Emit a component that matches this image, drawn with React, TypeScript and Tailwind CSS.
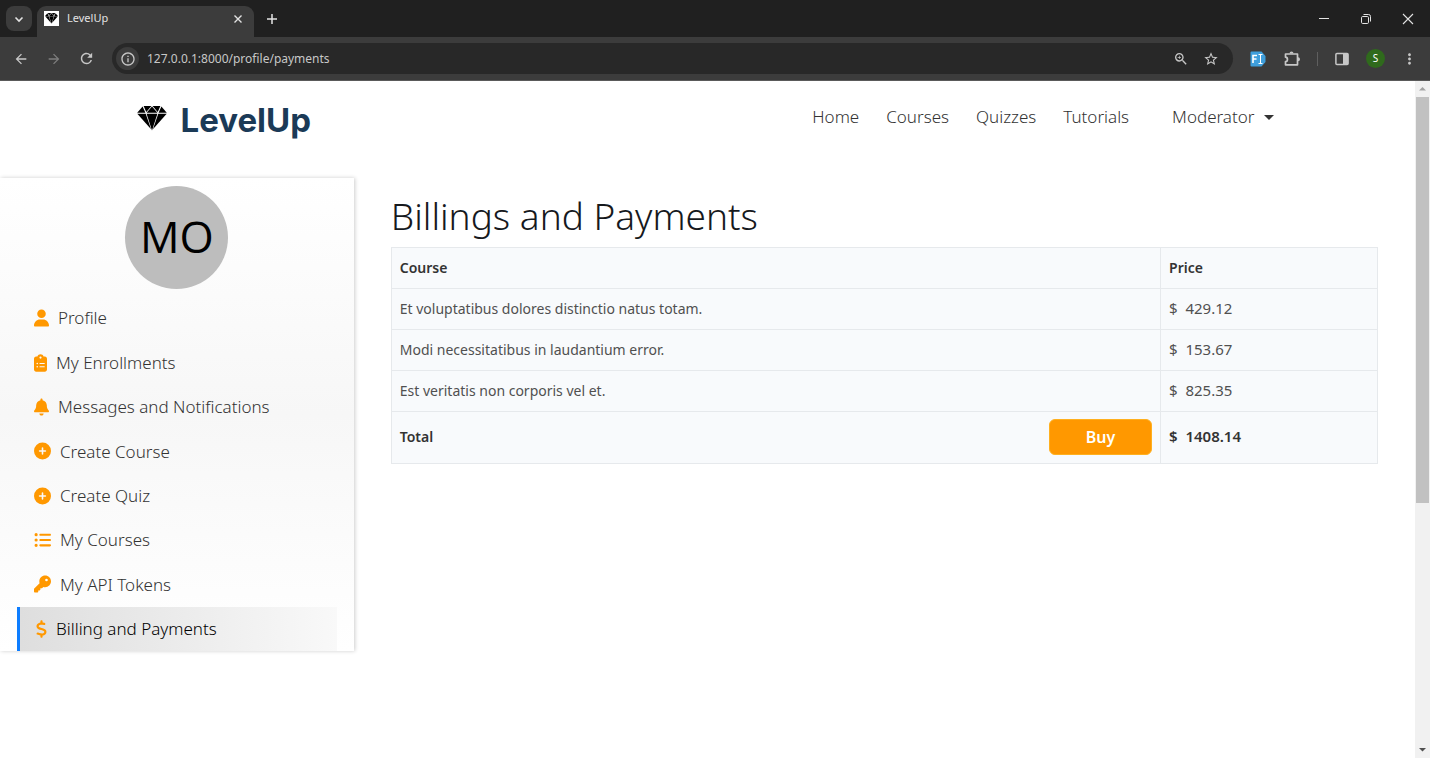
import type { ReactNode } from "react";
import { FaBell, FaCirclePlus, FaClipboardList, FaDollarSign, FaKey, FaListUl, FaUser } from "react-icons/fa6";
import {
  MdArrowBack,
  MdArrowForward,
  MdMoreVert,
  MdOutlineInfo,
  MdRefresh,
  MdStarBorder,
  MdZoomIn,
} from "react-icons/md";

function Diamond({ className }: { className?: string }) {
  return (
    <svg viewBox="0 0 30 25" className={className} fill="currentColor" aria-hidden="true">
      <path d="M5.6.6 8.4 6.8H.2z" />
      <path d="M6.6 0h7.8L9.3 6z" />
      <path d="M15 .5 20.4 6.8H9.6z" />
      <path d="M15.6 0h7.8l-2.700 6z" />
      <path d="M24.400.6 29.800 6.800h-8.200z" />
      <path d="M.3 7.700h8.400l5.400 15.600z" />
      <path d="M9.600 7.700h10.800L15 24.600z" />
      <path d="M21.300 7.700h8.400l-13.800 15.600z" />
    </svg>
  );
}

function IconButton({ label, className = "", children }: { label: string; className?: string; children: ReactNode }) {
  return (
    <button type="button" aria-label={label} className={`flex shrink-0 items-center justify-center ${className}`}>
      {children}
    </button>
  );
}

function TabStrip() {
  return (
    <div className="flex h-[37px] items-end bg-[#202020] pl-1.5 text-[#e3e3e3]">
      <IconButton label="Search tabs" className="mb-1.5 h-[25px] w-[26px] rounded-lg bg-[#3c3c3c]">
        <svg viewBox="0 0 10 10" className="size-2.5" fill="none" stroke="currentColor" strokeWidth="1.6">
          <path d="M1.5 3.5 5 7l3.5-3.5" />
        </svg>
      </IconButton>
      <div className="ml-[5px] flex h-[31px] w-[217px] items-center rounded-t-[9px] bg-[#3c3c3c] pr-2.5 pb-1.5 pl-[7px]">
        <span className="flex size-[15px] items-center justify-center bg-white text-black">
          <Diamond className="w-[13px]" />
        </span>
        <span className="ml-2 flex-1 text-[11px]">LevelUp</span>
        <IconButton label="Close tab" className="size-3">
          <svg viewBox="0 0 10 10" className="size-2.5" stroke="currentColor" strokeWidth="1.4">
            <path d="m1.5 1.5 7 7m0-7-7 7" />
          </svg>
        </IconButton>
      </div>
      <IconButton label="New tab" className="mb-2.5 ml-2.5 size-4">
        <svg viewBox="0 0 12 12" className="size-3" stroke="currentColor" strokeWidth="1.5">
          <path d="M6 1v10M1 6h10" />
        </svg>
      </IconButton>
      <div className="ml-auto flex h-full items-center gap-[30px] pr-4">
        <IconButton label="Minimize" className="size-3">
          <svg viewBox="0 0 12 12" className="size-3" stroke="currentColor">
            <path d="M1 5.5h10" />
          </svg>
        </IconButton>
        <IconButton label="Restore" className="size-3">
          <svg viewBox="0 0 12 12" className="size-3" fill="none" stroke="currentColor">
            <rect x="1.5" y="3.5" width="7" height="7" rx="1.2" />
            <path d="M3.5 1.5h5a2 2 0 0 1 2 2v5" />
          </svg>
        </IconButton>
        <IconButton label="Close window" className="size-3">
          <svg viewBox="0 0 12 12" className="size-3" stroke="currentColor" strokeWidth="1.1">
            <path d="m1 1 10 10M11 1 1 11" />
          </svg>
        </IconButton>
      </div>
    </div>
  );
}

function Toolbar() {
  return (
    <div className="flex h-11 items-center border-b border-[#5a5a5a] bg-[#3c3c3c] px-3 text-[#c7c7c7]">
      <IconButton label="Back" className="size-[17px]">
        <MdArrowBack className="size-4" />
      </IconButton>
      <IconButton label="Forward" className="ml-4 size-[17px] text-[#7d7d7d]">
        <MdArrowForward className="size-4" />
      </IconButton>
      <IconButton label="Reload" className="ml-4 size-[17px]">
        <MdRefresh className="size-[17px]" />
      </IconButton>
      <div className="ml-[17px] flex h-[31px] flex-1 items-center rounded-full bg-[#282828] pr-3.5 pl-1">
        <IconButton label="Site information" className="size-[23px] rounded-full bg-[#3c3c3c]">
          <MdOutlineInfo className="size-4" />
        </IconButton>
        <input
          type="text"
          aria-label="Address"
          defaultValue="127.0.0.1:8000/profile/payments"
          className="ml-2 min-w-0 flex-1 bg-transparent text-[12px] outline-none"
        />
        <IconButton label="Zoom" className="size-4">
          <MdZoomIn className="size-[18px]" />
        </IconButton>
        <IconButton label="Bookmark" className="ml-3.5 size-4">
          <MdStarBorder className="size-[18px]" />
        </IconButton>
      </div>
      <IconButton label="Font extension" className="ml-[17px] size-4">
        <svg viewBox="0 0 16 16" className="size-4">
          <path d="M1.5.5h10l4 4.5v6l-4 4.5h-10a1 1 0 0 1-1-1v-13a1 1 0 0 1 1-1z" fill="#3f9fdc" />
          <path d="M3 12V4.5h4M3 8h3.5" stroke="#fff" strokeWidth="1.6" fill="none" />
          <path d="M8.5 3.5h4M8.5 12.5h4M10.5 3.5v9" stroke="#fff" />
        </svg>
      </IconButton>
      <IconButton label="Extensions" className="ml-[17px] size-[18px]">
        <svg viewBox="0 0 18 18" className="size-[18px]">
          <path
            d="M2.5 4h12v10.8h-12v-3.2c2.6-.2 2.6-4.2 0-4.4z"
            fill="none"
            stroke="currentColor"
            strokeWidth="1.7"
            strokeLinejoin="round"
          />
          <path d="M6.5 3.5a2 2 0 0 1 4 0zM15 7.3a2 2 0 0 1 0 4z" fill="currentColor" />
        </svg>
      </IconButton>
      <span className="ml-4 h-3.5 w-px bg-[#5f5f5f]" />
      <IconButton label="Side panel" className="ml-4 size-4">
        <svg viewBox="0 0 16 16" className="size-4">
          <rect x="1.9" y="2.4" width="12.2" height="11.2" rx="1" fill="none" stroke="currentColor" strokeWidth="1.5" />
          <path d="M9 2.5h5v11H9z" fill="currentColor" />
        </svg>
      </IconButton>
      <button
        type="button"
        aria-label="Account"
        className="ml-4 flex size-[19px] items-center justify-center rounded-full bg-[#2f6a1c] text-[10px] text-white"
      >
        S
      </button>
      <IconButton label="Menu" className="ml-4 size-[17px]">
        <MdMoreVert className="size-5" />
      </IconButton>
    </div>
  );
}

const navLinks = ["Home", "Courses", "Quizzes", "Tutorials"];

function SiteHeader() {
  return (
    <header className="mx-auto flex h-[97px] w-full max-w-[1142px] items-start justify-between">
      <a href="#home" className="flex items-start pt-5">
        <Diamond className="mt-[5px] w-[30px] text-black" />
        <span className="ml-3.5 font-['Inter',sans-serif] text-[33px] leading-[38px] font-bold text-[#1b3a57]">
          LevelUp
        </span>
      </a>
      <nav className="flex items-center pt-6 pr-[5px] text-[17px] leading-6 font-light text-[#333]">
        <div className="flex gap-[27px]">
          {navLinks.map((link) => (
            <a key={link} href={`#${link.toLowerCase()}`}>
              {link}
            </a>
          ))}
        </div>
        <button type="button" className="ml-[43px] flex items-center gap-[9px]">
          Moderator
          <svg viewBox="0 0 10 5" className="w-2.5" fill="currentColor" aria-hidden="true">
            <path d="M0 0h10L5 5z" />
          </svg>
        </button>
      </nav>
    </header>
  );
}

const menu = [
  { label: "Profile", icon: FaUser, width: "w-[15px]" },
  { label: "My Enrollments", icon: FaClipboardList, width: "w-[13px]" },
  { label: "Messages and Notifications", icon: FaBell, width: "w-[15px]" },
  { label: "Create Course", icon: FaCirclePlus, width: "w-[17px]" },
  { label: "Create Quiz", icon: FaCirclePlus, width: "w-[17px]" },
  { label: "My Courses", icon: FaListUl, width: "w-[17px]" },
  { label: "My API Tokens", icon: FaKey, width: "w-[17px]" },
  { label: "Billing and Payments", icon: FaDollarSign, width: "w-[11px]", active: true },
];

function Sidebar() {
  return (
    <aside className="flex min-h-[473px] w-1/4 flex-col bg-linear-to-b from-white via-[#f7f7f7] to-white px-[17px] pt-2 shadow-[1px_0_4px_rgba(0,0,0,0.2)]">
      <div className="flex size-[103px] items-center justify-center self-center rounded-full bg-[#bdbdbd] pb-1 font-['Open_Sans',sans-serif] text-[44px] text-black">
        MO
      </div>
      <ul className="mt-[7px] grid flex-1 auto-rows-fr text-[17px] font-light">
        {menu.map(({ label, icon: Icon, width, active }) => (
          <li key={label} className="flex">
            <a
              href="#profile"
              aria-current={active ? "page" : undefined}
              className={
                active
                  ? "flex flex-1 items-center gap-[9px] border-l-[3px] border-[#0d7dff] bg-linear-to-r from-[#dedede] to-[#f9f9f9] pl-4 text-black"
                  : "flex flex-1 items-center gap-[9px] pl-[17px] text-[#333]"
              }
            >
              <Icon className={`h-[18px] text-[#ff9800] ${width}`} />
              {label}
            </a>
          </li>
        ))}
      </ul>
    </aside>
  );
}

const courses = [
  { name: "Et voluptatibus dolores distinctio natus totam.", price: "429.12" },
  { name: "Modi necessitatibus in laudantium error.", price: "153.67" },
  { name: "Est veritatis non corporis vel et.", price: "825.35" },
];

function Billing() {
  return (
    <main className="flex-1 px-[37px] pt-4">
      <h1 className="text-[37px] leading-[44px] font-light text-[#16191d]">Billings and Payments</h1>
      <table className="mt-[9px] w-full table-fixed border-collapse bg-[#f8fafc] text-left text-[14px] text-[#505050] [&_td]:border [&_td]:border-[#e6e9ec] [&_td]:px-2 [&_td]:pb-0.5 [&_th]:border [&_th]:border-[#e6e9ec] [&_th]:px-2 [&_th]:pb-0.5 [&_th]:font-semibold [&_th]:text-[#333]">
        <thead>
          <tr className="h-[41px]">
            <th scope="col" className="w-[78%]">
              Course
            </th>
            <th scope="col">Price</th>
          </tr>
        </thead>
        <tbody>
          {courses.map((course) => (
            <tr key={course.name} className="h-[41px]">
              <td>{course.name}</td>
              <td className="text-[15px] whitespace-pre">{`$  ${course.price}`}</td>
            </tr>
          ))}
        </tbody>
        <tfoot>
          <tr className="h-[52px]">
            <th scope="row">
              <div className="flex items-center justify-between">
                Total
                <button
                  type="button"
                  className="h-9 w-[103px] rounded-md border border-[#ffb01f] bg-[#ff9800] text-[16px] font-semibold text-white"
                >
                  Buy
                </button>
              </div>
            </th>
            <td className="text-[15px] font-semibold whitespace-pre text-[#333]">{"$  1408.14"}</td>
          </tr>
        </tfoot>
      </table>
    </main>
  );
}

function Scrollbar() {
  return (
    <div className="flex w-[15px] shrink-0 flex-col items-center bg-[#f1f1f1]" aria-hidden="true">
      <span className="flex h-4 items-center">
        <svg viewBox="0 0 8 4" className="w-[7px]" fill="#a3a3a3">
          <path d="M0 4h8L4 0z" />
        </svg>
      </span>
      <div className="w-full flex-1 px-px">
        <div className="h-[63%] bg-[#c1c1c1]" />
      </div>
      <span className="flex h-4 items-center">
        <svg viewBox="0 0 8 4" className="w-[7px]" fill="#505050">
          <path d="M0 0h8L4 4z" />
        </svg>
      </span>
    </div>
  );
}

export default function App() {
  return (
    <div className="flex min-h-screen flex-col bg-white font-['Noto_Sans',sans-serif]">
      <TabStrip />
      <Toolbar />
      <div className="flex flex-1">
        <div className="min-w-0 flex-1">
          <SiteHeader />
          <div className="flex items-start">
            <Sidebar />
            <Billing />
          </div>
        </div>
        <Scrollbar />
      </div>
    </div>
  );
}
